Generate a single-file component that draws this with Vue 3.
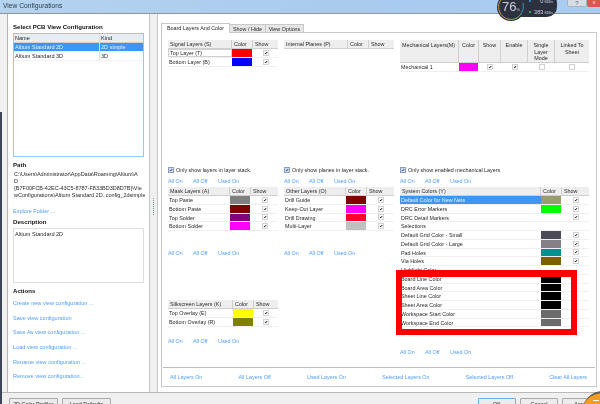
<script setup>
const listRows = [
  { name: 'Altium Standard 2D', kind: '2D simple', sel: true },
  { name: 'Altium Standard 3D', kind: '3D', sel: false },
]
const actions = [
  'Create new view configuration ...',
  'Save view configuration',
  'Save As view configuration ...',
  'Load view configuration ...',
  'Rename view configuration ...',
  'Remove view configuration...',
]
const footer = ['All Layers On', 'All Layers Off', 'Used Layers On', 'Selected Layers On', 'Selected Layers Off', 'Clear All Layers']
const R = (name, color, show = true, extra = {}) => ({ name, color, show, ...extra })

const columns = [
  [
    { cls: 'sec-top', table: 't-sig', title: 'Signal Layers (S)', rows: [R('Top Layer (T)', '#ff0000', true, { focus: true }), R('Bottom Layer (B)', '#0000ff')] },
    { cls: 'sec-mid', check: 'Only show layers in layer stack.', table: 't-mask', title: 'Mask Layers (A)', bottom: 'b-mask', rows: [R('Top Paste', '#808080'), R('Bottom Paste', '#800000'), R('Top Solder', '#800080'), R('Bottom Solder', '#ff00ff')] },
    { cls: 'sec-low', table: 't-silk', title: 'Silkscreen Layers (K)', bottom: 'b-silk', rows: [R('Top Overlay (E)', '#ffff00'), R('Bottom Overlay (R)', '#808000')] },
  ],
  [
    { cls: 'sec-top', table: 't-int', title: 'Internal Planes (P)', rows: [] },
    { cls: 'sec-mid', check: 'Only show planes in layer stack.', table: 't-oth', title: 'Other Layers (O)', bottom: 'b-mask', rows: [R('Drill Guide', '#800000'), R('Keep-Out Layer', '#ff00ff'), R('Drill Drawing', '#ff0033'), R('Multi-Layer', '#c0c0c0')] },
  ],
  [
    { cls: 'sec-top', mech: true },
    { cls: 'sec-sys', check: 'Only show enabled mechanical Layers', table: 't-sys', title: 'System Colors (Y)', bottom: 'b-sys', rows: [
      R('Default Color for New Nets', '#9b9b72', true, { sel: true }),
      R('DRC Error Markers', '#00ff00'),
      R('DRC Detail Markers', '', true),
      R('Selections', '', false),
      R('Default Grid Color - Small', '#4b4b5b'),
      R('Default Grid Color - Large', '#858087'),
      R('Pad Holes', '#00908f'),
      R('Via Holes', '#7f6000'),
      R('Highlight Color', '', false),
      R('Board Line Color', '#000000', false),
      R('Board Area Color', '#000000', false),
      R('Sheet Line Color', '#000000', false),
      R('Sheet Area Color', '#000000', false),
      R('Workspace Start Color', '#6b6b6b', false),
      R('Workspace End Color', '#6b6b6b', false),
    ] },
  ],
]
</script>

<template>
  <div class="window">
    <header class="titlebar">View Configurations</header>

    <div class="main">
      <aside class="left">
        <h2 class="head">Select PCB View Configuration</h2>
        <div class="listbox">
          <div class="list-row list-head"><span class="lc-name">Name</span><span class="lc-kind">Kind</span></div>
          <div v-for="r in listRows" :key="r.name" class="list-row" :class="{ selected: r.sel }">
            <span class="lc-name">{{ r.name }}</span><span class="lc-kind">{{ r.kind }}</span>
          </div>
        </div>
        <h2 class="head path-head">Path</h2>
        <p class="path">C:\Users\Administrator\AppData\Roaming\Altium\A<br>D<br>{B7F00FCB-42EC-43C5-8787-F833BD3D8D7B}\Vie<br>wConfigurations\Altium Standard 2D..config_2dsimple</p>
        <a class="link explore">Explore Folder ...</a>
        <h2 class="head desc-head">Description</h2>
        <div class="descbox">Altium Standard 2D</div>
        <h2 class="head actions-head">Actions</h2>
        <div class="actions">
          <a v-for="a in actions" :key="a" class="link">{{ a }}</a>
        </div>
      </aside>

      <div class="gutter"><span class="dots"></span></div>

      <section class="right">
        <nav class="tabs">
          <span class="tab active">Board Layers And Color</span>
          <span class="tab t2">Show / Hide</span>
          <span class="tab t3">View Options</span>
        </nav>
        <div class="sheet">
          <div class="columns">
            <div v-for="(col, ci) in columns" :key="ci" class="col" :class="'col' + ci">
              <div v-for="(s, si) in col" :key="si" :class="s.cls">
                <template v-if="s.mech">
                  <div class="mech mech-head">
                    <span class="hc left-txt">Mechanical Layers(M)</span>
                    <span class="hc">Color</span>
                    <span class="hc">Show</span>
                    <span class="hc">Enable</span>
                    <span class="hc">Single<br>Layer<br>Mode</span>
                    <span class="hc last">Linked To<br>Sheet</span>
                  </div>
                  <div class="mech mech-row">
                    <span class="name">Mechanical 1</span>
                    <span class="swatch" style="background:#ff00ff"></span>
                    <span class="ckcell"><svg class="ck" viewBox="0 0 6 6"><path d="M1.4 3 L2.5 4.3 L4.7 1.6" /></svg></span>
                    <span class="ckcell"><svg class="ck" viewBox="0 0 6 6"><path d="M1.4 3 L2.5 4.3 L4.7 1.6" /></svg></span>
                    <span class="ckcell"><svg class="ck" viewBox="0 0 6 6"></svg></span>
                    <span class="ckcell"><svg class="ck" viewBox="0 0 6 6"></svg></span>
                  </div>
                </template>
                <template v-else>
                  <label v-if="s.check" class="only">
                    <svg class="ck2" viewBox="0 0 6 6"><path d="M1.4 3 L2.5 4.3 L4.7 1.6" /></svg>{{ s.check }}
                  </label>
                  <div v-if="s.check" class="links"><a class="link">All On</a><a class="link">All Off</a><a class="link">Used On</a></div>
                  <div class="lt-row lt-head" :class="s.table">
                    <span class="hc left-txt">{{ s.title }}</span><span class="hc left-txt">Color</span><span class="hc left-txt last">Show</span>
                  </div>
                  <div v-for="r in s.rows" :key="r.name" class="lt-row" :class="s.table">
                    <span class="name" :class="{ selname: r.sel, focus: r.focus }">{{ r.name }}</span>
                    <span class="swatch" :style="{ background: r.color || 'transparent' }"></span>
                    <span class="ckcell"><svg v-if="r.show" class="ck" viewBox="0 0 6 6"><path d="M1.4 3 L2.5 4.3 L4.7 1.6" /></svg></span>
                  </div>
                  <div v-if="s.bottom" class="links" :class="s.bottom"><a class="link">All On</a><a class="link">All Off</a><a class="link">Used On</a></div>
                </template>
              </div>
            </div>
          </div>
          <footer class="sheet-foot">
            <a v-for="f in footer" :key="f" class="link">{{ f }}</a>
          </footer>
        </div>
      </section>
    </div>

    <div class="buttons">
      <button class="btn">2D Color Profiles</button>
      <button class="btn">Load Defaults</button>
      <button class="btn ok">OK</button>
      <button class="btn">Cancel</button>
      <button class="btn">Apply</button>
    </div>

    <div class="redbox"></div>

    <div class="gauge">
      <div class="pill">
        <span class="rate r1"><i class="dot blue"></i><b>0</b> KB/s</span>
        <span class="rate r2"><i class="dot green"></i><b>383</b> KB/s</span>
      </div>
      <svg class="dial" viewBox="0 0 28 28">
        <circle cx="14" cy="14" r="14" fill="#2c3140" />
        <path d="M12 26.3 A12.5 12.5 0 0 1 5 5.5" fill="none" stroke="#d8a24a" stroke-width="0.9" />
        <path d="M12 26.3 A12.5 12.5 0 0 0 24 21" fill="none" stroke="#7fc45a" stroke-width="0.9" />
        <path d="M24 21 A12.5 12.5 0 0 0 26 10" fill="none" stroke="#3aa3c9" stroke-width="0.9" />
      </svg>
      <span class="pct">76<small>%</small></span>
    </div>
    <div class="winbtn help">?</div>
    <div class="winbtn close">x</div>
    <div class="edge"></div>
    <div class="orange"><span></span></div>
  </div>
</template>

<style>
html, body { margin: 0; background: #f0f0f0; }
</style>

<style scoped>
.window {
  width: 600px; height: 404px; position: relative; overflow: hidden;
  background: #f0f0f0; display: flex; flex-direction: column;
  font-family: "Liberation Sans", Arial, sans-serif; font-size: 5.4px; line-height: 8px; color: #2a2a2a;
  filter: blur(0.4px);
}
.titlebar {
  height: 14px; padding-left: 3px; box-sizing: border-box; flex: none;
  background: linear-gradient(90deg, #b4d3ef, #a8cbee 60%, #a9cdf0);
  border-bottom: 1px solid #8f959b; font-size: 6.7px; line-height: 12px; color: #30404f;
}
.main { display: flex; height: 379px; flex: none; padding-left: 7px; border-bottom: 1px solid #b9b9b9; box-sizing: border-box; }
.left { width: 143px; box-sizing: border-box; background: #fff; border-left: 1px solid #b4b4b4; border-right: 1px solid #c8c8c8; padding: 9px 5px 0 5px; font-size: 5.55px; }
.head { margin: 0; font-size: 6.1px; line-height: 8px; font-weight: 700; color: #111; }
.listbox { margin-top: 2px; height: 124px; box-sizing: border-box; border: 1px solid #98c6f5; background: #fff; }
.list-row { display: flex; height: 9px; line-height: 9px; }
.list-head { height: 8.5px; background: #ececec; border-bottom: 1px solid #d0d0d0; box-sizing: border-box; line-height: 8px; }
.list-row .lc-name { width: 85px; padding-left: 1px; box-sizing: border-box; }
.list-row .lc-kind { flex: 1; padding-left: 1px; border-left: 1px solid #dcdcdc; }
.selected { background: #3d96f2; color: #e8f3ff; }
.list-row:not(.list-head) { border-bottom: 1px solid #f2f2f2; box-sizing: border-box; }
.path-head { margin-top: 4px; }
.path { margin: 1.5px 0 0 1px; line-height: 7px; font-size: 5.5px; white-space: nowrap; }
.link { color: #4f9dfa; display: block; white-space: nowrap; }
.explore { margin-top: 8.5px; }
.desc-head { margin-top: 3px; }
.descbox { margin-top: 2px; height: 55px; box-sizing: border-box; border: 1px solid #dedede; padding: 1px 1px; }
.actions-head { margin-top: 4px; }
.actions { margin-top: 4px; display: flex; flex-direction: column; gap: 6.7px; }

.gutter { width: 7px; background: #f0f0f0; display: flex; align-items: center; justify-content: center; flex: none; }
.dots { width: 1px; height: 18px; margin-top: 8px; background: repeating-linear-gradient(180deg, #6f9a8a 0 1px, transparent 1px 2px); }

.right { flex: 1; background: #fff; border-left: 1px solid #c8c8c8; padding: 9px 3px 5px 3px; display: flex; flex-direction: column; box-sizing: border-box; min-width: 0; }
.tabs { display: flex; height: 9px; flex: none; position: relative; z-index: 1; }
.tab { line-height: 8px; margin-top: 1px; padding: 0 1px; text-align: center; background: #e6e6e6; border: 1px solid #c8c8c8; border-left: 0; box-sizing: content-box; height: 7px; }
.tab.active { width: 67px; margin-top: 0; height: 9px; background: #fff; border-left: 1px solid #c8c8c8; border-bottom: 0; line-height: 9px; padding: 0; }
.tab.t2 { width: 33px; }
.tab.t3 { width: 35px; }
.sheet { flex: 1; border: 1px solid #c8c8c8; display: flex; flex-direction: column; min-height: 0; }
.columns { flex: 1; display: flex; gap: 6px; padding: 7px 6px 0 6px; min-height: 0; }
.col { width: 110px; flex: none; }
.col2 { width: 189px; }
.sec-top { height: 126px; }
.sec-mid { height: 134px; }
.only { display: flex; align-items: center; height: 8px; gap: 2px; }
.ck, .ck2 { width: 6px; height: 6px; flex: none; background: #fff; border: 1px solid #d2d2d2; box-sizing: border-box; }
.ck path, .ck2 path { fill: none; stroke: #000; stroke-width: 1.4; }
.ck2 { background: #c9d9f0; border-color: #8d9db5; }
.ck2 path { stroke: #24408a; }
.links { display: flex; height: 8px; margin-top: 3px; margin-bottom: 2px; }
.links .link { width: 25px; flex: none; }
.b-mask { margin-top: 18px; }
.b-silk { margin-top: 10px; }
.b-sys { margin-top: 21px; }

.lt-row { display: grid; height: 8.75px; border-bottom: 1px solid #f0f0f0; box-sizing: border-box; line-height: 8px; }
.lt-head { background: #eeeeee; border-bottom: 1px solid #cfcfcf; height: 9px; }
.t-sig, .t-int { grid-template-columns: 64px 21px 25px; }
.t-mask, .t-oth { grid-template-columns: 62px 21px 27px; }
.t-silk { grid-template-columns: 65px 21px 24px; }
.t-sys { grid-template-columns: 141px 21px 27px; }
.hc { border-right: 1px solid #cfcfcf; box-sizing: border-box; text-align: center; }
.hc.last { border-right: 0; }
.left-txt { text-align: left; padding-left: 2px; }
.name { padding-left: 1px; white-space: nowrap; overflow: hidden; }
.name.focus { border: 1px solid #cfcfcf; line-height: 6px; height: 8px; box-sizing: border-box; }
.selname { background: #3d96f2; color: #e8f3ff; }
.swatch { display: block; margin: 0 1px 0 0; height: 100%; }
.ckcell { display: flex; align-items: center; justify-content: center; }

.mech { display: grid; grid-template-columns: 59px 20px 22px 27px 27px 34px; }
.mech-head { height: 23px; background: #eeeeee; border-bottom: 1px solid #cfcfcf; box-sizing: border-box; line-height: 6.7px; padding-top: 2px; }
.mech-head .hc { margin-top: -2px; padding-top: 2px; height: 23px; box-sizing: border-box; }
.mech-row { height: 9px; border-bottom: 1px solid #f0f0f0; box-sizing: border-box; line-height: 8px; }

.sheet-foot { flex: none; height: 19px; margin: 0 1px; border-top: 1px solid #bdbdbd; display: flex; justify-content: space-between; align-items: center; padding: 0 8px 0 7px; box-sizing: border-box; }

.buttons { display: flex; gap: 4px; padding: 5px 0 0 9px; flex: none; }
.btn { width: 49px; height: 12px; flex: none; padding: 0; font: inherit; line-height: 9px; text-align: center; background: #ececec; border: 1px solid #a9a9a9; border-radius: 1px; color: #222; display: block; }
.btn:nth-child(3) { margin-left: 363px; width: 38px; border-color: #69aee0; }
.btn:nth-child(4), .btn:nth-child(5) { width: 38px; }

.redbox { position: absolute; left: 396px; top: 270px; width: 181px; height: 65px; box-sizing: border-box; border: solid #ff0000; border-width: 7px 6px 6px 6px; pointer-events: none; }

.gauge { position: absolute; left: 497px; top: -7px; width: 60px; height: 28px; }
.dial { position: absolute; left: 0; top: 0; width: 28px; height: 28px; }
.pill { position: absolute; left: 14px; top: 0; width: 46px; height: 24px; border-radius: 0 10px 10px 0; background: #2c3140; color: #cfd5de; font-size: 4px; }
.rate { position: absolute; right: 4px; display: block; line-height: 6px; white-space: nowrap; }
.rate b { font-weight: 400; font-size: 5.6px; }
.r1 { top: 5px; }
.r2 { top: 16px; }
.dot { position: absolute; width: 2px; height: 2px; border-radius: 50%; top: 2px; }
.r1 .dot { right: 11px; left: -11px; }
.r2 .dot { left: -5px; }
.blue { background: #25a5e8; }
.green { background: #3fd06b; }
.pct { position: absolute; left: 0; width: 28px; top: 7px; text-align: center; font-size: 13px; line-height: 14px; color: #c9ced8; }
.pct small { font-size: 4px; }
.winbtn { position: absolute; top: -1px; height: 8px; text-align: center; line-height: 7px; font-size: 6px; box-sizing: border-box; border-radius: 0 0 2px 2px; }
.help { left: 567px; width: 20px; background: #d5dde6; border: 1px solid #aab4be; color: #5c6670; }
.close { left: 587px; width: 14px; background: #d8584f; color: #fbe4e2; }
.edge { position: absolute; left: 0; top: 112px; width: 2px; height: 292px; background: #3c4656; }
.orange { position: absolute; left: 582px; top: 391px; width: 42px; height: 42px; border-radius: 50%; background: #f39c1f; border-top: 2px solid #5c5a55; box-sizing: border-box; }
.orange span { position: absolute; left: 11px; top: 7px; width: 6px; height: 1px; background: #fff; }
</style>
